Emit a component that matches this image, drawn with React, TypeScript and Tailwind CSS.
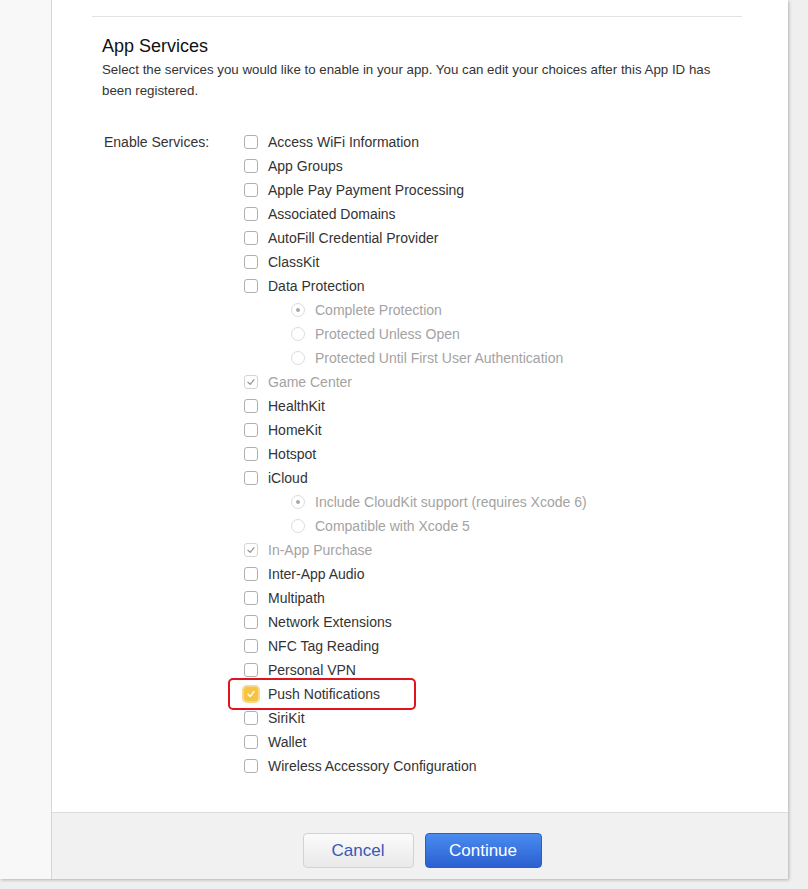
import React from "react";

type Item = {
  label: string;
  kind: "check" | "radio";
  checked?: boolean;
  disabled?: boolean;
  highlight?: boolean;
};

const items: Item[] = [
  { label: "Access WiFi Information", kind: "check" },
  { label: "App Groups", kind: "check" },
  { label: "Apple Pay Payment Processing", kind: "check" },
  { label: "Associated Domains", kind: "check" },
  { label: "AutoFill Credential Provider", kind: "check" },
  { label: "ClassKit", kind: "check" },
  { label: "Data Protection", kind: "check" },
  { label: "Complete Protection", kind: "radio", checked: true, disabled: true },
  { label: "Protected Unless Open", kind: "radio", disabled: true },
  { label: "Protected Until First User Authentication", kind: "radio", disabled: true },
  { label: "Game Center", kind: "check", checked: true, disabled: true },
  { label: "HealthKit", kind: "check" },
  { label: "HomeKit", kind: "check" },
  { label: "Hotspot", kind: "check" },
  { label: "iCloud", kind: "check" },
  { label: "Include CloudKit support (requires Xcode 6)", kind: "radio", checked: true, disabled: true },
  { label: "Compatible with Xcode 5", kind: "radio", disabled: true },
  { label: "In-App Purchase", kind: "check", checked: true, disabled: true },
  { label: "Inter-App Audio", kind: "check" },
  { label: "Multipath", kind: "check" },
  { label: "Network Extensions", kind: "check" },
  { label: "NFC Tag Reading", kind: "check" },
  { label: "Personal VPN", kind: "check" },
  { label: "Push Notifications", kind: "check", checked: true, highlight: true },
  { label: "SiriKit", kind: "check" },
  { label: "Wallet", kind: "check" },
  { label: "Wireless Accessory Configuration", kind: "check" },
];

function Check({ checked, disabled, highlight }: Item) {
  if (highlight) {
    return (
      <span className="flex h-[14px] w-[14px] items-center justify-center rounded-[3px] bg-[#f6c445] shadow-[0_0_0_2px_#f8d98c]">
        <svg width="10" height="10" viewBox="0 0 10 10">
          <path d="M2 5.2 L4.2 7.4 L8 2.6" fill="none" stroke="#fff" strokeWidth="1.4" strokeLinecap="round" strokeLinejoin="round" />
        </svg>
      </span>
    );
  }
  return (
    <span
      className={
        "flex h-[14px] w-[14px] items-center justify-center rounded-[3px] border bg-white " +
        (disabled ? "border-[#d4d4d4]" : "border-[#b0b0b0]")
      }
    >
      {checked && (
        <svg width="10" height="10" viewBox="0 0 10 10">
          <path d="M2 5.2 L4.2 7.4 L8 2.6" fill="none" stroke="#9a9a9a" strokeWidth="1.3" strokeLinecap="round" strokeLinejoin="round" />
        </svg>
      )}
    </span>
  );
}

function Radio({ checked }: Item) {
  return (
    <span className="flex h-[14px] w-[14px] items-center justify-center rounded-full border border-[#dcdcdc] bg-white">
      {checked && <span className="h-[4px] w-[4px] rounded-full bg-[#a8a8a8]" />}
    </span>
  );
}

function Row(item: Item) {
  const isRadio = item.kind === "radio";
  return (
    <div className={"relative flex h-6 items-center gap-[10px] " + (isRadio ? "pl-[47px]" : "")}>
      {item.highlight && (
        <span className="absolute left-[-16px] top-[-4px] h-8 w-[188px] rounded-[5px] border-2 border-[#e0141e]" />
      )}
      {isRadio ? <Radio {...item} /> : <Check {...item} />}
      <span className={item.disabled ? "text-[#a3a3a3]" : "text-[#333]"}>{item.label}</span>
    </div>
  );
}

export default function App() {
  return (
    <div
      className="min-h-[889px] bg-[#efefef] text-[14px]"
      style={{ fontFamily: '"Liberation Sans", Arial, sans-serif' }}
    >
      <div className="flex h-[879px] w-[788px] shadow-[1px_1px_3px_rgba(0,0,0,0.25)]">
        <div className="w-[52px] shrink-0 border-r border-[#d6d6d6] bg-[#f8f8f8]" />
        <div className="flex flex-1 flex-col bg-white">
          <div className="flex-1 pt-4">
            <div className="ml-10 mr-[46px] border-t border-[#e3e3e3]" />
            <div className="pl-[50px] pr-[40px]">
              <h2 className="mt-[17px] text-[18px] leading-6 text-[#111]">App Services</h2>
              <p className="mt-[1px] text-[13.3px] leading-[21px] text-[#333]">
                <span className="whitespace-nowrap">
                  Select the services you would like to enable in your app. You can edit your choices after this App ID has
                </span>
                <br />
                been registered.
              </p>
              <div className="mt-[29px] flex">
                <div className="flex h-6 w-[142px] shrink-0 items-center pl-[2px] text-[#333]">Enable Services:</div>
                <div className="flex flex-col">
                  {items.map((it) => (
                    <Row key={it.label} {...it} />
                  ))}
                </div>
              </div>
            </div>
          </div>
          <div className="flex h-[67px] items-start justify-center gap-[11px] border-t border-[#dcdcdc] bg-[#f1f1f1] pl-[4px] pt-[20px]">
            <button className="h-[35px] w-[111px] rounded-[4px] border border-[#d2d2d2] bg-gradient-to-b from-[#fbfbfb] to-[#e9e9e9] text-[17px] text-[#3559b8]">
              Cancel
            </button>
            <button className="h-[35px] w-[117px] rounded-[4px] border border-[#2a5fc8] bg-gradient-to-b from-[#4a8cf0] to-[#2b5fd0] text-[17px] text-white">
              Continue
            </button>
          </div>
        </div>
      </div>
    </div>
  );
}
